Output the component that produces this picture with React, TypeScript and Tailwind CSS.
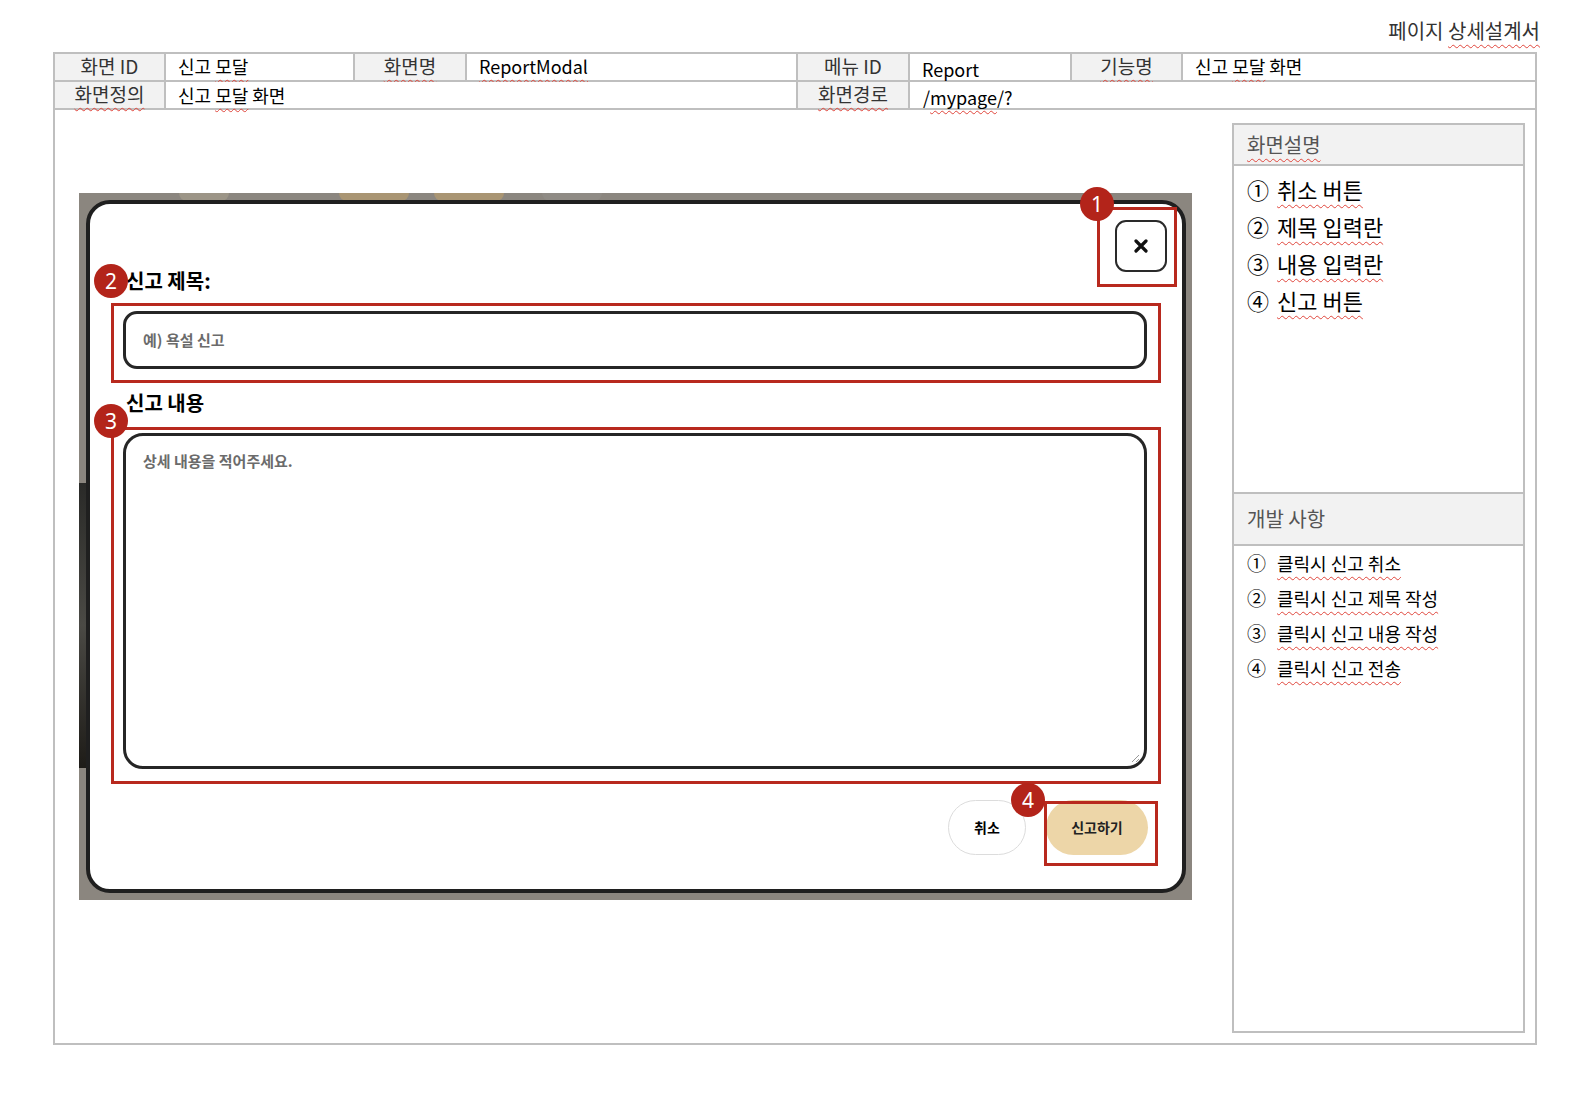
const sq = "underline decoration-wavy decoration-[#e0463c] decoration-1 underline-offset-[5px]";

function Badge({ n, x, y }: { n: number; x: number; y: number }) {
  return (
    <div
      className="absolute w-[34px] h-[34px] -ml-[17px] -mt-[17px] rounded-full bg-[#b3241a] text-white flex items-center justify-center text-[21px] leading-none font-['Noto_Sans',sans-serif]"
      style={{ left: x, top: y }}
    >
      {n}
    </div>
  );
}

function RedBox({ x, y, w, h }: { x: number; y: number; w: number; h: number }) {
  return (
    <div
      className="absolute border-[3px] border-[#b8291e]"
      style={{ left: x, top: y, width: w, height: h }}
    />
  );
}

function HeadCell({ children, u }: { children: React.ReactNode; u?: boolean }) {
  return (
    <div className="bg-[#f2f2f2] flex items-center justify-center text-[19px] text-[#333] pb-[1px]">
      <span className={u ? sq : ""}>{children}</span>
    </div>
  );
}

function ValCell({ children, pt }: { children: React.ReactNode; pt?: boolean }) {
  return (
    <div className={`bg-white flex items-center pl-[12px] text-[18px] text-black ${pt ? "pt-[4px]" : "pb-[1px]"}`}>
      <span>{children}</span>
    </div>
  );
}

export default function App() {
  const kr = "font-['Noto_Sans_CJK_KR','Noto_Sans',sans-serif]";
  const circ = ["①", "②", "③", "④"];
  return (
    <div className={`w-[1594px] h-[1102px] relative bg-white ${kr}`}>
      <div className="pl-[53px]">
        {/* 제목 */}
        <div className="w-[1487px] h-[52px] flex justify-end items-start pt-[17px] text-[20px] leading-[28px] text-[#333]">
          <span>
            페이지 <span className={sq}>상세설계서</span>
          </span>
        </div>

        <div className="w-[1484px] h-[993px] border-2 border-[#bfbfbf] flex flex-col">
          {/* 상단 표 */}
          <div className="grid grid-cols-[109px_187px_110px_329px_110px_160px_109px_352px] grid-rows-[26px_26px] gap-[2px] bg-[#bfbfbf] border-b-2 border-[#bfbfbf]">
            <HeadCell>화면 ID</HeadCell>
            <ValCell>
              신고 <span className={sq}>모달</span>
            </ValCell>
            <HeadCell u>화면명</HeadCell>
            <ValCell>
              <span className={sq}>ReportModal</span>
            </ValCell>
            <HeadCell>메뉴 ID</HeadCell>
            <ValCell pt>Report</ValCell>
            <HeadCell u>기능명</HeadCell>
            <ValCell>
              신고 <span className={sq}>모달</span> 화면
            </ValCell>
            <HeadCell u>화면정의</HeadCell>
            <div className="col-span-3 bg-white flex items-center pl-[12px] text-[18px]">
              <span>
                신고 <span className={sq}>모달</span> 화면
              </span>
            </div>
            <HeadCell u>화면경로</HeadCell>
            <div className="col-span-3 bg-white flex items-center pl-[13px] text-[18px] pt-[5px]">
              <span>
                /<span className={sq}>mypage</span>/?
              </span>
            </div>
          </div>

          {/* 본문 */}
          <div className="flex flex-1">
            {/* 모달 캡처 */}
            <div className="ml-[24px] mt-[83px] w-[1113px] h-[707px] bg-[#8b867f] relative">
              <div className="absolute left-0 top-[290px] w-[8px] h-[285px] bg-gradient-to-b from-[#2a2a28] via-[#4b4a45] to-[#1e1c18]" />
              <div className="absolute left-[100px] top-0 w-[50px] h-[8px] rounded-b-full bg-[#9c9587]" />
              <div className="absolute left-[260px] top-0 w-[70px] h-[8px] rounded-b-full bg-[#a99573]" />
              <div className="absolute left-[355px] top-0 w-[70px] h-[8px] rounded-b-full bg-[#a99573]" />
              <div className="absolute left-[463px] top-0 w-[60px] h-[8px] rounded-b-full bg-[#8f8b85]" />

              <div className="absolute left-[7px] top-[7px] right-[6px] bottom-[7px] bg-white border-4 border-[#1f1f1f] rounded-[24px] pl-[33px] pr-[35px] pt-[16px]">
                <div className="flex justify-end -mr-[20px]">
                  <div className="w-[52px] h-[52px] border-2 border-[#2a2a2a] rounded-[11px] flex items-center justify-center">
                    <svg width="14" height="14" viewBox="0 0 14 14">
                      <path d="M2 2 L12 12 M12 2 L2 12" stroke="#111" strokeWidth="3.2" strokeLinecap="round" />
                    </svg>
                  </div>
                </div>

                <div className="-mt-[3px] pl-[3px] text-[20px] leading-[24px] font-bold text-black">신고 제목:</div>
                <div className="mt-[18px] h-[58px] border-[3px] border-[#262626] rounded-[14px] flex items-center pl-[17px] text-[15px] font-bold text-[#6b6b6b]">
                  예) 욕설 신고
                </div>

                <div className="mt-[22px] pl-[3px] text-[20px] leading-[24px] font-bold text-black">신고 내용</div>
                <div className="mt-[18px] h-[336px] border-[3px] border-[#262626] rounded-[20px] pl-[17px] pt-[14px] text-[15px] font-bold text-[#6b6b6b] relative">
                  상세 내용을 적어주세요.
                  <svg className="absolute right-[4px] bottom-[3px]" width="10" height="10" viewBox="0 0 10 10">
                    <path d="M9 2 L2 9 M9 6 L6 9" stroke="#999" strokeWidth="1" />
                  </svg>
                </div>

                <div className="mt-[31px] flex justify-end gap-[20px] -mr-[1px]">
                  <div className="w-[78px] h-[55px] rounded-full border border-[#dcdcdc] bg-white flex items-center justify-center text-[14px] font-bold text-black">
                    취소
                  </div>
                  <div className="w-[102px] h-[55px] rounded-full bg-[#edd6a8] flex items-center justify-center text-[14px] font-bold text-[#222]">
                    신고하기
                  </div>
                </div>
              </div>
            </div>

            {/* 우측 설명 */}
            <div className="ml-auto mr-[10px] mt-[13px] mb-[10px] w-[293px] border-2 border-[#bfbfbf] flex flex-col">
              <div className="h-[41px] bg-[#f2f2f2] border-b-2 border-[#bfbfbf] flex items-center pl-[13px] text-[20px] text-[#555]">
                <span className={sq}>화면설명</span>
              </div>
              <div className="pt-[5px] pl-[13px] h-[326px]">
                {["취소 버튼", "제목 입력란", "내용 입력란", "신고 버튼"].map((t, i) => (
                  <div key={t} className="flex items-center h-[37px] text-[22px] text-black">
                    <span className="w-[30px] text-[22px]">{circ[i]}</span>
                    <span className={sq}>{t}</span>
                  </div>
                ))}
              </div>
              <div className="h-[54px] bg-[#f2f2f2] border-y-2 border-[#bfbfbf] flex items-center pl-[13px] text-[20px] text-[#555]">
                개발 사항
              </div>
              <div className="pt-[0px] pl-[13px]">
                {["클릭시 신고 취소", "클릭시 신고 제목 작성", "클릭시 신고 내용 작성", "클릭시 신고 전송"].map((t, i) => (
                  <div key={t} className="flex items-center h-[35px] text-[18px] text-black">
                    <span className="w-[30px] text-[19px]">{circ[i]}</span>
                    <span className={sq}>{t}</span>
                  </div>
                ))}
              </div>
            </div>
          </div>
        </div>
      </div>

      {/* 주석 표시 */}
      <RedBox x={1097} y={207} w={80} h={80} />
      <RedBox x={111} y={303} w={1050} h={80} />
      <RedBox x={111} y={427} w={1050} h={357} />
      <RedBox x={1044} y={801} w={114} h={65} />
      <Badge n={1} x={1097} y={204} />
      <Badge n={2} x={111} y={281} />
      <Badge n={3} x={111} y={421} />
      <Badge n={4} x={1028} y={800} />
    </div>
  );
}
